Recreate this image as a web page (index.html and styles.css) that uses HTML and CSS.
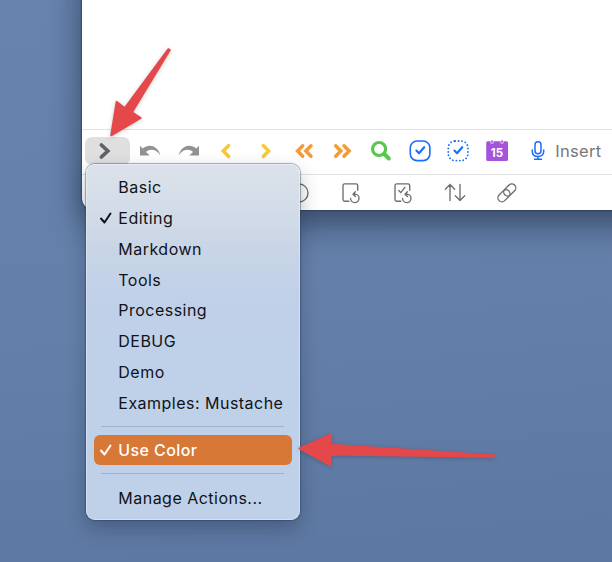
FILE: index.html
```html
<!DOCTYPE html>
<html lang="en">
<head>
<meta charset="utf-8">
<title>Actions menu</title>
<link rel="stylesheet" href="styles.css">
</head>
<body>
<main class="desktop">
  <section class="window">
    <div class="editor"></div>
    <div class="toolbar">
      <button class="group-button"><svg class="icon" viewBox="-12 -12 24 24"><path class="line dark" d="M-3.600-6 2.800 0-3.600 6"/></svg></button>
      <div class="actions">
        <span class="cell"><svg class="icon" viewBox="-12 -12 24 24"><path class="gray" d="M-10-5.200V4.500H-.3L-4 1C-.5-2.300 6-2.200 10.300 4.200 8-5-1-8-7.200-2.400Z"/></svg></span>
        <span class="cell"><svg class="icon" viewBox="-12 -12 24 24"><path class="gray" d="M10-5.200V4.500H.3L4 1C.5-2.300-6-2.200-10.300 4.200-8-5 1-8 7.200-2.400Z"/></svg></span>
        <span class="cell"><svg class="icon" viewBox="-12 -12 24 24"><path class="line yellow" d="M1.600-5.400-3.700 0 1.600 5.400"/></svg></span>
        <span class="cell"><svg class="icon" viewBox="-12 -12 24 24"><path class="line yellow" d="M-2.700-5.400 2.600 0-2.700 5.400"/></svg></span>
        <span class="cell"><svg class="icon" viewBox="-12 -12 24 24"><path class="line orange" d="M-1.300-5.200-6.400 0-1.300 5.200M7-5.200 1.900 0 7 5.200"/></svg></span>
        <span class="cell"><svg class="icon" viewBox="-12 -12 24 24"><path class="line orange" d="M-7.300-5.200-2.200 0-7.300 5.200M1-5.200 6.100 0 1 5.200"/></svg></span>
        <span class="cell"><svg class="icon" viewBox="-12 -12 24 24"><circle class="line green" cx="-1.900" cy="-2" r="6.500"/><path class="line green handle" d="M3 2.800 7.800 7.500"/></svg></span>
        <span class="cell"><svg class="icon" viewBox="-12 -12 24 24"><rect class="blue" x="-9.700" y="-10" width="19.600" height="19.600" rx="6.800"/><path class="blue tick" d="M-3.600-.4-1 2.200 4.200-3.800"/></svg></span>
        <span class="cell"><svg class="icon" viewBox="-12 -12 24 24"><rect class="blue dotted" x="-9.700" y="-10" width="19.600" height="19.600" rx="6.800"/><path class="blue tick" d="M-3.600-.4-1 2.200 4.200-3.800"/></svg></span>
        <span class="cell"><svg class="icon" viewBox="-12 -12 24 24"><rect class="purple" x="-10.800" y="-9.700" width="21.800" height="19.700" rx="1.500"/><path class="notch" d="M-5-11V-7.500M5-11V-7.500"/><path class="peg" d="M-5-10.200V-8.500M5-10.200V-8.500"/><text class="date" x="0" y="6.300">15</text></svg></span>
      </div>
      <svg class="icon mic" viewBox="-12 -12 24 24"><rect class="blue thin" x="-3" y="-9.200" width="6" height="12" rx="3"/><path class="blue thin" d="M-5.700-1V.5C-5.700 3.700-3.300 5.500 0 5.500S5.700 3.700 5.700.5V-1M0 5.500V8.300M-3.500 8.300H3.500"/></svg>
      <span class="insert">Insert</span>
    </div>
    <div class="secondary">
      <span class="slot"><svg class="icon" viewBox="-12 -12 24 24"><circle class="outline" r="9"/><path class="outline" d="M0-5V2M0 4.500V5"/></svg></span>
      <span class="slot"><svg class="icon" viewBox="-12 -12 24 24"><path class="outline" d="M-2.200 8.200H-6.200Q-8 8.200-8 6.400V-7.500Q-8-9.200-6.200-9.200H5Q6.700-9.200 6.700-7.500V-2.800M2.200 1.200H4A4.200 4.200 0 1 1-.4 5.400M4.400-1.300 2 1.200 4.400 3.600"/></svg></span>
      <span class="slot"><svg class="icon" viewBox="-12 -12 24 24"><path class="outline" d="M-2.200 8.200H-6.200Q-8 8.200-8 6.400V-7.500Q-8-9.200-6.200-9.200H5Q6.700-9.200 6.700-7.500V-2.800M2.200 1.200H4A4.200 4.200 0 1 1-.4 5.400M4.400-1.300 2 1.200 4.400 3.600M-4.200-2.500-2.200-.4 1.800-5.600"/></svg></span>
      <span class="slot"><svg class="icon" viewBox="-12 -12 24 24"><path class="outline" d="M-5 7.500V-8.500M-9.700-3.700-5-8.500-.3-3.700M5-8.500V7.500M.3 2.700 5 7.500 9.700 2.700"/></svg></span>
      <span class="slot"><svg class="icon" viewBox="-12 -12 24 24"><g transform="rotate(-45)"><rect class="outline" x="-11" y="-4.200" width="13.800" height="8" rx="4"/><rect class="outline" x="-2.800" y="-4.200" width="13.800" height="8" rx="4"/></g></svg></span>
    </div>
  </section>

  <nav class="menu">
    <div class="item">Basic</div>
    <div class="item"><svg class="check" viewBox="0 0 14 14"><path d="M2 7.500 5.500 11.500 11.500 2.500"/></svg>Editing</div>
    <div class="item">Markdown</div>
    <div class="item">Tools</div>
    <div class="item">Processing</div>
    <div class="item">DEBUG</div>
    <div class="item">Demo</div>
    <div class="item">Examples: Mustache</div>
    <hr class="rule">
    <div class="item selected"><svg class="check" viewBox="0 0 14 14"><path d="M2 7.500 5.500 11.500 11.500 2.500"/></svg>Use Color</div>
    <hr class="rule">
    <div class="item">Manage Actions...</div>
  </nav>

  <svg class="pointers" viewBox="0 0 612 562">
    <path d="M168.400 49.200 124.800 108.200 116.600 101.800 111.200 135.300 140.700 118 131.900 112.400 169.800 50Z"/>
    <path d="M299.500 448.300 331 434.500 330.500 444.800 494 455.400V456.800L330.500 454.400 330 465Z"/>
  </svg>
</main>
</body>
</html>
```
FILE: styles.css
```css
* { box-sizing: border-box; }
body { margin: 0; }

.desktop {
  position: relative;
  width: 612px;
  height: 562px;
  overflow: hidden;
  background: linear-gradient(175deg, #6784ae 0%, #6480aa 55%, #5c78a2 100%);
  font-family: Inter, "Liberation Sans", sans-serif;
}

.window {
  position: absolute;
  left: 82px;
  top: -60px;
  width: 640px;
  height: 270px;
  display: flex;
  flex-direction: column;
  background: #fff;
  border-radius: 12px;
  box-shadow: 0 0 1px 1px rgba(35, 50, 75, .5), 0 16px 32px rgba(20, 28, 45, .46), 0 0 24px rgba(20, 28, 45, .16);
}
.editor { height: 190px; border-bottom: 1px solid #e3e3e3; flex: none; }
.toolbar {
  display: flex;
  align-items: center;
  height: 45px;
  padding: 0 0 2px 3px;
  border-bottom: 1px solid #e3e3e3;
}
.group-button {
  width: 45px;
  height: 28px;
  padding: 0 6px 0 0;
  border: 0;
  border-radius: 7px;
  background: #dfdfdf;
  display: flex;
  align-items: center;
  justify-content: center;
}
.actions { display: flex; margin-left: 1px; }
.cell { width: 38.500px; display: flex; justify-content: center; }
.icon { width: 24px; height: 24px; display: block; flex: none; }
.mic { margin-left: 10px; }
.insert { margin-left: 5.300px; font-size: 16.500px; letter-spacing: .3px; color: #77777a; }
.secondary { display: flex; align-items: center; height: 35px; padding: 1px 0 0 191px; }
.slot { width: 52px; display: flex; justify-content: center; }

.line { fill: none; stroke-width: 3.500; stroke-linecap: round; stroke-linejoin: miter; }
.dark { stroke: #606166; stroke-width: 3.700; }
.gray { fill: #929295; }
.yellow { stroke: #f8c838; }
.orange { stroke: #f59a35; }
.green { stroke: #56c84c; stroke-width: 3.200; }
.handle { stroke-width: 4; }
.blue { fill: none; stroke: #1a6cfa; stroke-width: 1.600; stroke-linecap: round; stroke-linejoin: round; }
.tick { stroke-width: 2.100; }
.thin { stroke-width: 1.500; }
.dotted { stroke-dasharray: .1 3.350; stroke-width: 1.800; }
.purple { fill: #a553da; }
.notch { stroke: #fff; stroke-width: 2.800; }
.peg { stroke: #a553da; stroke-width: 1.500; stroke-linecap: round; }
.date { fill: #fff; font-size: 11.500px; font-weight: 700; text-anchor: middle; }
.outline { fill: none; stroke: #6d6d70; stroke-width: 1.350; stroke-linecap: round; stroke-linejoin: round; }

.menu {
  position: absolute;
  left: 86px;
  top: 164px;
  width: 213.500px;
  height: 356px;
  padding: 7.900px 7.800px;
  border-radius: 9px;
  background: linear-gradient(#dce2eb 0, #d3dce8 45px, #c9d5e6 85px, #c0d0e9 135px, #bfd0e9 100%);
  box-shadow: inset 0 0 0 1px rgba(255, 255, 255, .35), 0 0 1px 1px rgba(40, 55, 80, .4), 0 9px 20px rgba(20, 30, 50, .3);
  color: #101318;
}
.item {
  display: flex;
  align-items: center;
  height: 30.750px;
  padding-left: 24.500px;
  font-size: 16px;
  letter-spacing: .48px;
  white-space: nowrap;
}
.check { width: 14px; height: 14px; margin-left: -19.500px; margin-right: 5.500px; fill: none; stroke: currentColor; stroke-width: 2; stroke-linecap: round; stroke-linejoin: round; }
.selected { background: #d77836; border-radius: 6px; color: #fff; font-weight: 500; letter-spacing: .4px; }
.rule { height: 1px; margin: 7.900px 7.500px; border: 0; background: #a0b1cd; }

.pointers { position: absolute; left: 0; top: 0; width: 612px; height: 562px; fill: #e5484b; stroke: #e5484b; stroke-width: 2; stroke-linejoin: round; filter: drop-shadow(0 1px 2px rgba(0, 0, 0, .2)); }
```
